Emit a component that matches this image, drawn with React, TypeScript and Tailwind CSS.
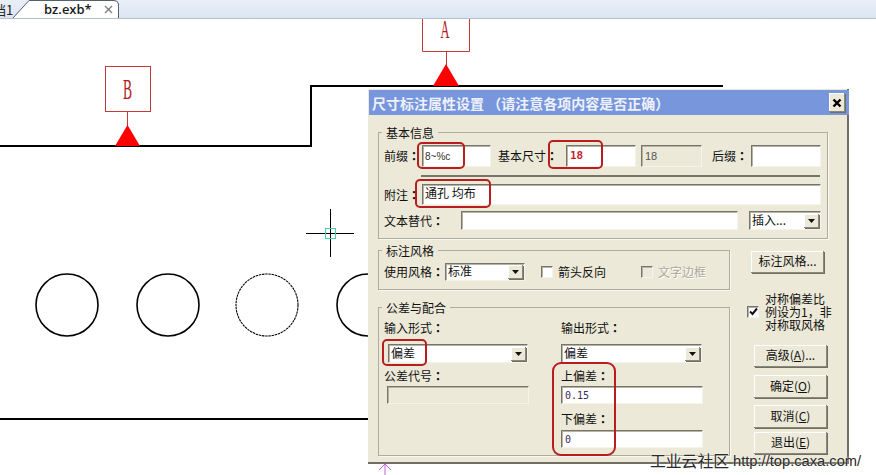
import React from "react";

const cn = "font-['Noto_Sans_CJK_SC','Liberation_Sans',sans-serif]";
const sunken =
  "border border-t-[#77756a] border-l-[#77756a] border-r-[#f4f3ec] border-b-[#f4f3ec] shadow-[inset_1px_1px_0_#b5b3a6]";
const raised =
  "bg-[#ece9d8] shadow-[inset_-1px_-1px_0_#8a887a,inset_1px_1px_0_#ffffff,1px_1px_0_#716f64]";

function Label({ w, text, className = "" }: { w?: string; text: string; className?: string }) {
  return (
    <span className={`shrink-0 whitespace-nowrap text-[12px] leading-[16px] text-[#111] ${w ?? ""} ${className}`}>
      {text}
      <span className="font-['Noto_Sans_CJK_TC',sans-serif] font-bold">：</span>
    </span>
  );
}

function Input({ className, children }: { className: string; children?: React.ReactNode }) {
  return (
    <div className={`flex shrink-0 items-center bg-white pl-[2px] ${sunken} ${className}`}>{children}</div>
  );
}

function Arrow({ className }: { className: string }) {
  return (
    <span className={`flex shrink-0 items-center justify-center ${raised} ${className}`}>
      <svg width="7" height="4" viewBox="0 0 7 4">
        <path d="M0 0H7L3.5 4Z" fill="#111" />
      </svg>
    </span>
  );
}

function Combo({ className, text }: { className: string; text: string }) {
  return (
    <div className={`flex shrink-0 items-center justify-between bg-white pl-[2px] pr-px ${sunken} ${className}`}>
      <span className="mt-[-2px] text-[12px] leading-[16px] text-[#111]">{text}</span>
      <Arrow className="h-[14px] w-[15px]" />
    </div>
  );
}

function Check({ checked, disabled }: { checked?: boolean; disabled?: boolean }) {
  return (
    <span
      className={`flex h-[12px] w-[12px] shrink-0 items-center justify-center ${disabled ? "bg-[#ece9d8]" : "bg-white"} ${sunken}`}
    >
      {checked && (
        <svg width="9" height="9" viewBox="0 0 9 9">
          <path d="M1 4.5L3.5 7L8 1.5" fill="none" stroke="#111" strokeWidth="2" />
        </svg>
      )}
    </span>
  );
}

function Group({ title, className, children }: { title: string; className: string; children: React.ReactNode }) {
  return (
    <div className={`relative shrink-0 border border-[#aeac9e] shadow-[1px_1px_0_#f8f7f0] ${className}`}>
      <span className="absolute left-[3px] top-[-8px] bg-[#ece9d8] px-[4px] text-[12px] leading-[16px] text-[#111]">
        {title}
      </span>
      {children}
    </div>
  );
}

function Btn({ className, children }: { className: string; children: React.ReactNode }) {
  return (
    <div className={`flex shrink-0 items-center justify-center pb-[2px] text-[12px] leading-[16px] text-[#111] ${raised} ${className}`}>
      {children}
    </div>
  );
}

function Drawing() {
  return (
    <svg className="block h-[456px] w-[876px]" viewBox="0 19 876 456">
      <path d="M0 146H311V86H723" fill="none" stroke="#000" strokeWidth="2" />
      <path d="M0 419H370" fill="none" stroke="#000" strokeWidth="2" />
      <rect x="105.5" y="66.5" width="45" height="45" fill="none" stroke="#c23a3a" />
      <path d="M127.5 112V126" stroke="#c23a3a" />
      <path d="M127.5 125L115 146H140Z" fill="#ff0000" />
      <text x="0" y="0" transform="translate(127.5 99) scale(0.62 1.35)" textAnchor="middle" fontSize="22" fontFamily="'Liberation Serif',serif" fill="#b01a24">
        B
      </text>
      <path d="M422.5 10V51.5H469.5V10" fill="none" stroke="#c23a3a" />
      <path d="M446.5 52V66" stroke="#c23a3a" />
      <path d="M446 64L433 86H459Z" fill="#ff0000" />
      <text x="0" y="0" transform="translate(445 38) scale(0.62 1.3)" textAnchor="middle" fontSize="20" fontFamily="'Liberation Serif',serif" fill="#b01a24">
        A
      </text>
      <circle cx="67" cy="305" r="31" fill="none" stroke="#000" strokeWidth="1.6" />
      <circle cx="168" cy="305" r="31" fill="none" stroke="#000" strokeWidth="1.6" />
      <circle cx="267" cy="305" r="31" fill="none" stroke="#000" strokeWidth="1.1" strokeDasharray="2.5 0.7" />
      <circle cx="368" cy="305" r="31" fill="none" stroke="#000" strokeWidth="1.6" />
      <path d="M306 233.5H354M330.5 209V257" stroke="#000" />
      <rect x="325.5" y="228.5" width="10" height="10" fill="none" stroke="#45d0a5" />
      <path d="M385 464V475M385 464L379 470M385 464L391 470" fill="none" stroke="#c060d8" />
    </svg>
  );
}

function Dialog() {
  return (
    <div className={`absolute left-[368px] top-[89px] flex h-[375px] w-[481px] flex-col bg-[#ece9d8] pl-px pt-px shadow-[inset_-2px_-2px_0_#716f64] ${cn}`}>
      <div className="flex h-[25px] shrink-0 items-center justify-between bg-[#7896dc] pl-[3px] pr-[4px]">
        <span className="whitespace-nowrap text-[14px] font-bold leading-[18px] text-[#eef1fb]">
          尺寸标注属性设置 （请注意各项内容是否正确）
        </span>
        <span className={`flex h-[19px] w-[16px] items-center justify-center ${raised}`}>
          <svg width="10" height="10" viewBox="0 0 10 10">
            <path d="M1.5 1.5L8.5 8.5M8.5 1.5L1.5 8.5" stroke="#000" strokeWidth="2.4" />
          </svg>
        </span>
      </div>

      <div className="flex flex-col pl-[9px] pt-[17px]">
        <Group title="基本信息" className="h-[107px] w-[450px]">
          <div className="flex flex-col pl-[5px] pt-[12px]">
            <div className="flex items-center">
              <Label w="w-[38px]" text="前缀" />
              <Input className="h-[22px] w-[69px]">
                <span className="font-['Liberation_Sans',sans-serif] text-[10px] text-[#333]">8~%c</span>
              </Input>
              <Label w="w-[68px]" className="ml-[7px]" text="基本尺寸" />
              <Input className="h-[22px] w-[70px]">
                <span className="ml-px font-['DejaVu_Sans_Mono',monospace] text-[11px] font-bold text-[#c8202c]">18</span>
              </Input>
              <div className={`ml-[5px] flex h-[22px] w-[61px] shrink-0 items-center pl-[3px] ${sunken}`}>
                <span className="font-['Liberation_Sans',sans-serif] text-[11px] text-[#555]">18</span>
              </div>
              <Label w="w-[39px]" className="ml-[10px]" text="后缀" />
              <Input className="h-[22px] w-[70px]" />
            </div>
            <div className="ml-[37px] mt-[8px] h-[2px] w-[399px] bg-[#77756a]" />
            <div className="mt-[7px] flex items-center">
              <Label w="w-[38px]" text="附注" />
              <Input className="h-[21px] w-[399px]">
                <span className="mt-[-3px] text-[12px] leading-[16px] text-[#111]">通孔 均布</span>
              </Input>
            </div>
            <div className="mt-[6px] flex items-center">
              <Label w="w-[77px]" text="文本替代" />
              <Input className="h-[19px] w-[277px]" />
              <Combo className="ml-[11px] h-[19px] w-[72px]" text="插入..." />
            </div>
          </div>
        </Group>

        <div className="mt-[11px] flex">
          <div className="flex flex-col">
            <Group title="标注风格" className="h-[40px] w-[352px]">
              <div className="flex items-center pl-[5px] pt-[12px]">
                <Label w="w-[61px]" text="使用风格" />
                <Combo className="h-[18px] w-[80px]" text="标准" />
                <span className="ml-[16px]"><Check /></span>
                <span className="ml-[5px] whitespace-nowrap text-[12px] leading-[16px] text-[#111]">箭头反向</span>
                <span className="ml-[35px]"><Check disabled /></span>
                <span className="ml-[5px] whitespace-nowrap text-[12px] leading-[16px] text-[#aca899] [text-shadow:1px_1px_0_#fff]">文字边框</span>
              </div>
            </Group>
            <Group title="公差与配合" className="mt-[17px] h-[149px] w-[352px]">
              <div className="flex pt-[12px]">
                <div className="flex w-[182px] shrink-0 flex-col pl-[5px]">
                  <Label text="输入形式" />
                  <Combo className="ml-[4px] mt-[8px] h-[19px] w-[140px]" text="偏差" />
                  <Label className="mt-[5px]" text="公差代号" />
                  <div className={`ml-[3px] mt-[2px] h-[18px] w-[142px] ${sunken}`} />
                </div>
                <div className="flex flex-col">
                  <Label text="输出形式" />
                  <Combo className="mt-[8px] h-[19px] w-[141px]" text="偏差" />
                  <Label className="mt-[5px]" text="上偏差" />
                  <Input className="mt-[2px] h-[18px] w-[142px]">
                    <span className="ml-px font-['DejaVu_Sans_Mono',monospace] text-[10px] text-[#3a2a5a]">0.15</span>
                  </Input>
                  <Label className="mt-[7px]" text="下偏差" />
                  <Input className="mt-[3px] h-[18px] w-[142px]">
                    <span className="ml-px font-['DejaVu_Sans_Mono',monospace] text-[10px] text-[#3a2a5a]">0</span>
                  </Input>
                </div>
              </div>
            </Group>
          </div>

          <div className="ml-[14px] flex flex-col pt-px">
            <Btn className="ml-[7px] h-[22px] w-[73px]">标注风格...</Btn>
            <div className="ml-[3px] mt-[19px] flex items-center">
              <Check checked />
              <span className="ml-[6px] w-[70px] text-[12px] leading-[13px] text-[#111]">
                对称偏差比<br />例设为1，非<br />对称取风格
              </span>
            </div>
            <Btn className="ml-[10px] mt-[14px] h-[22px] w-[73px]">
              高级(<span className="underline">A</span>)...
            </Btn>
            <Btn className="ml-[10px] mt-[8px] h-[23px] w-[73px]">
              确定(<span className="underline">O</span>)
            </Btn>
            <Btn className="ml-[10px] mt-[7px] h-[23px] w-[73px]">
              取消(<span className="underline">C</span>)
            </Btn>
            <Btn className="ml-[10px] mt-[4px] h-[22px] w-[73px]">
              退出(<span className="underline">E</span>)
            </Btn>
          </div>
        </div>
      </div>
    </div>
  );
}

function TabBar() {
  return (
    <div className="relative z-10 flex h-[19px] shrink-0 items-start overflow-hidden border-b border-[#b4c0cc] bg-gradient-to-b from-[#e9eff8] to-[#dbe5f1]">
      <span className={`ml-[-7px] mt-px w-[27px] shrink-0 whitespace-nowrap text-[13px] leading-[17px] text-[#222] ${cn}`}>档1</span>
      <div className="relative h-[19px] w-[100px] shrink-0">
        <svg className="absolute left-[-9px] top-0" width="109" height="19" viewBox="-9 0 109 19">
          <path d="M-8 19L9 0.5H94Q98 0.5 98.5 4V19Z" fill="#fff" stroke="#55606c" />
        </svg>
        <span className="absolute left-[24px] top-0 font-['Open_Sans',sans-serif] text-[13px] font-semibold leading-[18px] text-[#1c1c1c]">bz.exb*</span>
        <svg className="absolute left-[84px] top-[5px]" width="9" height="9" viewBox="0 0 9 9">
          <path d="M1 1L8 8M8 1L1 8" stroke="#7f7f7f" strokeWidth="1.4" />
        </svg>
      </div>
    </div>
  );
}

export default function App() {
  return (
    <div className="relative flex h-[475px] w-[876px] flex-col overflow-hidden bg-white">
      <TabBar />
      <Drawing />
      <Dialog />
      <div className="absolute left-[417px] top-[142px] h-[27px] w-[48px] rounded-[5px] border-2 border-[#b81e1e]" />
      <div className="absolute left-[548px] top-[140px] h-[29px] w-[55px] rounded-[5px] border-2 border-[#b81e1e]" />
      <div className="absolute left-[415px] top-[179px] h-[29px] w-[76px] rounded-[5px] border-2 border-[#b81e1e]" />
      <div className="absolute left-[382px] top-[339px] h-[27px] w-[45px] rounded-[5px] border-2 border-[#b81e1e]" />
      <div className="absolute left-[552px] top-[362px] h-[94px] w-[64px] rounded-[9px] border-2 border-[#b81e1e]" />
      <div className={`absolute left-[650px] top-[451px] flex items-center whitespace-nowrap text-[#2a2a2a] [text-shadow:0_0_2px_#fff] ${cn}`}>
        <span className="text-[15.8px] leading-[20px]">工业云社区</span>
        <span className="ml-[4px] font-['Liberation_Sans',sans-serif] text-[14.7px] leading-[20px]">http://top.caxa.com/</span>
      </div>
    </div>
  );
}
